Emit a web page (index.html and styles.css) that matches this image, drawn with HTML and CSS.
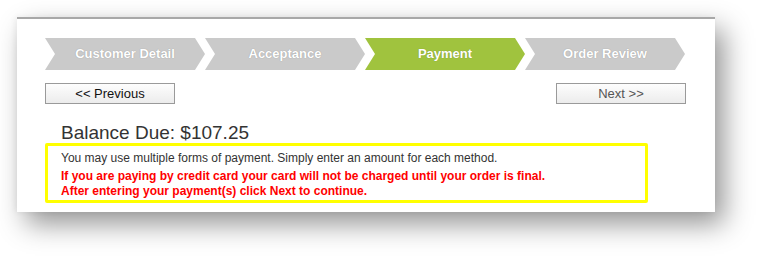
FILE: index.html
```html
<!DOCTYPE html>
<html lang="en">
<head>
    <meta charset="UTF-8">
    <meta name="viewport" content="width=device-width, initial-scale=1.0">
    <title>Payment</title>
    <link rel="stylesheet" href="styles.css">
</head>
<body>
<div class="card">
    <div class="wizard">
        <div class="steps">
            <div class="step">Customer Detail</div>
            <div class="step">Acceptance</div>
            <div class="step active">Payment</div>
            <div class="step">Order Review</div>
        </div>
        <div class="nav-buttons">
            <button class="nav-btn">&lt;&lt; Previous</button>
            <button class="nav-btn next">Next &gt;&gt;</button>
        </div>
        <div class="balance">Balance Due: $107.25</div>
        <div class="notice">
            <p class="info">You may use multiple forms of payment. Simply enter an amount for each method.</p>
            <p class="warning">If you are paying by credit card your card will not be charged until your order is final.<br>
            After entering your payment(s) click Next to continue.</p>
        </div>
    </div>
</div>
</body>
</html>
```

FILE: styles.css
```css
html, body {
    height: 100%;
}
body {
    font-family: "Liberation Sans", Arial, sans-serif;
    margin: 0;
    padding: 17px 0 0 17px;
    box-sizing: border-box;
    background-color: #fff;
}
.card {
    width: 698px;
    height: 193px;
    background-color: #fff;
    border-top: 2px solid #a8a8a8;
    box-shadow: 9px 12px 26px rgba(0, 0, 0, 0.42), -2px 0 6px rgba(0, 0, 0, 0.05);
}
.wizard {
    width: 641px;
    padding: 19px 0 0 28px;
}
.steps {
    display: flex;
    height: 32px;
}
.step {
    width: 160px;
    height: 32px;
    line-height: 32px;
    text-align: center;
    font-size: 13px;
    font-weight: bold;
    color: #fff;
    background-color: #cacaca;
    text-shadow: 0 0 1px rgba(0, 0, 0, 0.3);
    clip-path: polygon(0 0, 150px 0, 160px 50%, 150px 100%, 0 100%, 10px 50%);
}
.step.active {
    background-color: #a0c33e;
}
.nav-buttons {
    display: flex;
    justify-content: space-between;
    margin-top: 13px;
}
.nav-btn {
    width: 130px;
    height: 21px;
    padding: 0;
    font-family: "Liberation Sans", Arial, sans-serif;
    font-size: 13px;
    color: #111;
    border: 1px solid #9a9a9a;
    background: linear-gradient(#fdfdfd, #ececec);
}
.nav-btn.next {
    color: #555;
}
.balance {
    margin: 19px 0 0 16px;
    font-size: 19px;
    line-height: 20px;
    color: #333;
}
.notice {
    width: 571px;
    border: 3px solid #ffff00;
    border-radius: 2px;
    padding: 5px 13px 1px;
    font-size: 12px;
    line-height: 15px;
}
.notice p {
    margin: 0;
}
.info {
    color: #333;
}
.warning {
    margin-top: 3px !important;
    color: #f00;
    font-weight: bold;
}
```
